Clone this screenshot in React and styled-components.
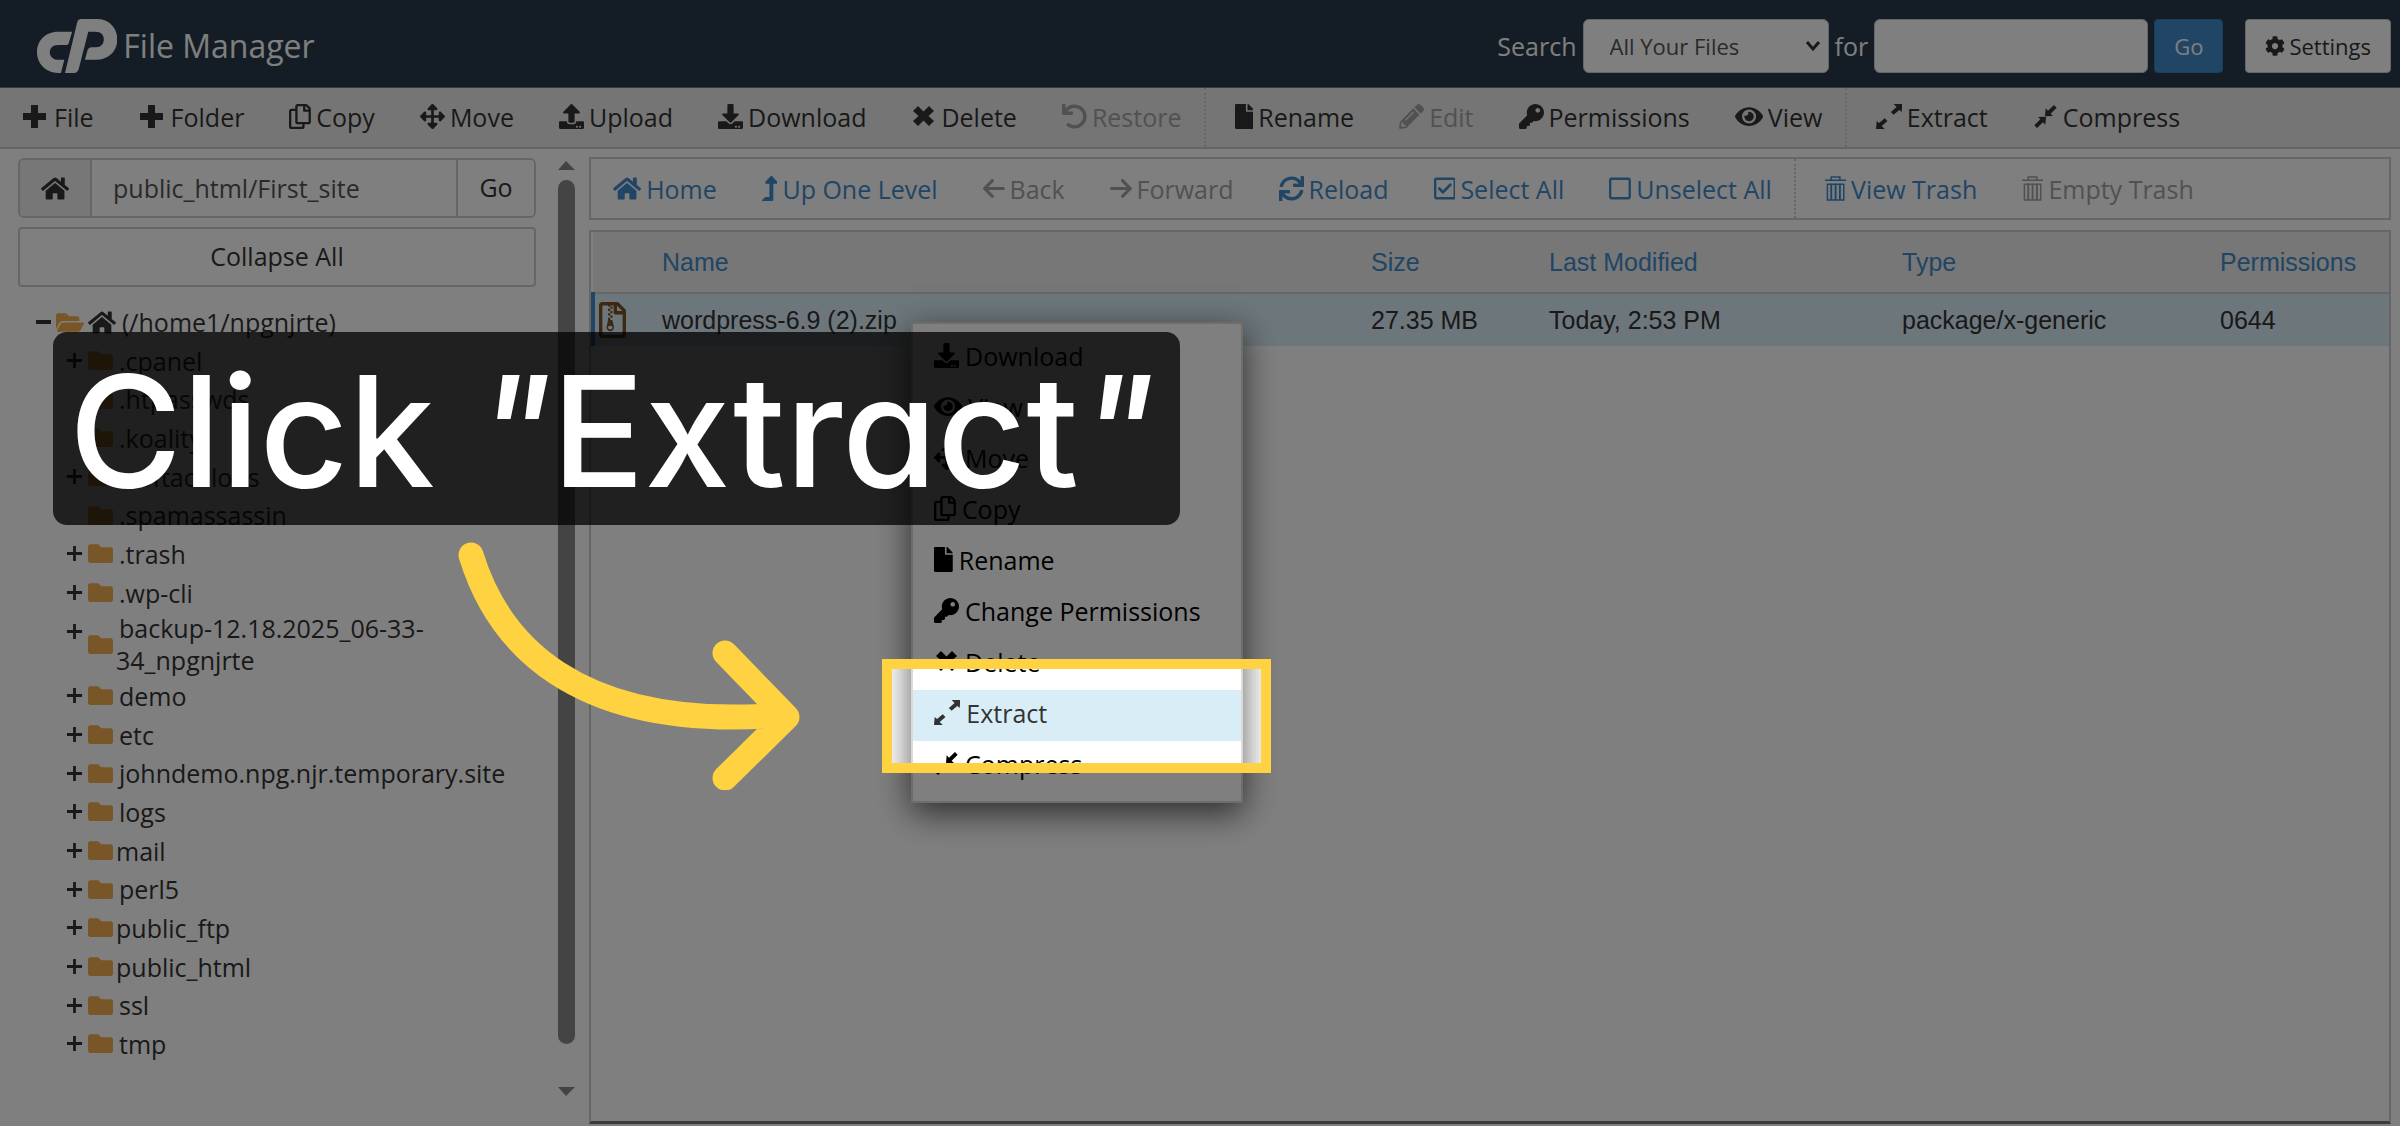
import React from "react";
import styled, { createGlobalStyle } from 'styled-components';
import { IconContext } from 'react-icons';
import {
	FaRegCopy, FaArrowsAlt, FaUpload, FaDownload, FaUndo, FaFile, FaPencilAlt, FaKey, FaEye,
	FaHome, FaLevelUpAlt, FaSync, FaRegCheckSquare, FaRegSquare, FaCog, FaFolder, FaFolderOpen,
	FaRegFileArchive
} from 'react-icons/fa';
import { FaArrowLeft, FaArrowRight } from 'react-icons/fa6';


const PlusIcon = () => (
	<svg viewBox="0 0 25 25" fill="currentColor"><path d="M9 1h7v8h8v7h-8v8H9v-8H1V9h8z" /></svg>
);

const TimesIcon = () => (
	<svg viewBox="0 0 25 25" fill="currentColor"><path d="M7 2l5.500 5.500L18 2l5 5-5.500 5L23 17l-5 5-5.500-5.500L7 22l-5-5 5.500-5L2 7z" /></svg>
);

const ExpandIcon = () => (
	<svg viewBox="0 0 78 74" fill="currentColor">
		<path d="M52 0h26l-2 24-7-6-17 14-8-8 17-15z" />
		<path d="M26 74H0l2-24 7 6 17-14 8 8-17 15z" />
	</svg>
);

const CompressIcon = () => (
	<svg viewBox="0 0 75 75" fill="currentColor">
		<path d="M63 3l8 8-18 18 7 7-24 1 2-24 7 7z" />
		<path d="M12 72l-8-8 18-18-7-7 24-1-2 24-7-7z" />
	</svg>
);

const TrashIcon = () => (
	<svg viewBox="0 0 22 26" fill="none" stroke="currentColor" strokeWidth="1.600">
		<path d="M0 4.500h22M6.500 4V1h9v3" />
		<path d="M2.500 8.500h17v16.500h-17z" />
		<path d="M6.500 8v17M11 8v17M15.500 8v17" strokeWidth="2" />
	</svg>
);

const CpanelLogo = () => (
	<svg viewBox="0 0 238 160" fill="currentColor" role="img" aria-label="cPanel">
		<path d="M104 38H62C24 38 0 66 0 98c0 36 28 62 62 62h9l10-39H64c-15 0-26-9-26-22 0-14 10-22 24-22h25c4 0 6-2 7-5z" />
		<path d="M83 160L119 10c2-7 6-10 12-10h47c36 0 60 27 60 61 0 33-26 60-62 60h-34l7-26c2-7 6-11 13-11h13c14 0 23-10 23-23 0-14-9-23-24-23h-22l-28 109c-2 9-7 13-14 13z" />
	</svg>
);


const tools = [
	[
		{ label: 'File', icon: PlusIcon, wide: true },
		{ label: 'Folder', icon: PlusIcon, wide: true },
		{ label: 'Copy', icon: FaRegCopy },
		{ label: 'Move', icon: FaArrowsAlt },
		{ label: 'Upload', icon: FaUpload },
		{ label: 'Download', icon: FaDownload },
		{ label: 'Delete', icon: TimesIcon },
		{ label: 'Restore', icon: FaUndo, disabled: true },
	],
	[
		{ label: 'Rename', icon: FaFile },
		{ label: 'Edit', icon: FaPencilAlt, disabled: true },
		{ label: 'Permissions', icon: FaKey },
		{ label: 'View', icon: FaEye },
	],
	[
		{ label: 'Extract', icon: ExpandIcon },
		{ label: 'Compress', icon: CompressIcon },
	],
];

const actions = [
	[
		{ label: 'Home', icon: FaHome },
		{ label: 'Up One Level', icon: FaLevelUpAlt },
		{ label: 'Back', icon: FaArrowLeft, disabled: true },
		{ label: 'Forward', icon: FaArrowRight, disabled: true },
		{ label: 'Reload', icon: FaSync },
		{ label: 'Select All', icon: FaRegCheckSquare },
		{ label: 'Unselect All', icon: FaRegSquare },
	],
	[
		{ label: 'View Trash', icon: TrashIcon },
		{ label: 'Empty Trash', icon: TrashIcon, disabled: true },
	],
];

const folders = [
	{ name: '.cpanel', open: true },
	{ name: '.htpasswds' },
	{ name: '.koality' },
	{ name: '.softaculous', open: true },
	{ name: '.spamassassin' },
	{ name: '.trash', open: true },
	{ name: '.wp-cli', open: true },
	{ name: 'backup-12.18.2025_06-33-34_npgnjrte', open: true },
	{ name: 'demo', open: true },
	{ name: 'etc', open: true },
	{ name: 'johndemo.npg.njr.temporary.site', open: true },
	{ name: 'logs', open: true },
	{ name: 'mail', open: true, tight: true },
	{ name: 'perl5', open: true },
	{ name: 'public_ftp', open: true, tight: true },
	{ name: 'public_html', open: true, tight: true },
	{ name: 'ssl', open: true },
	{ name: 'tmp', open: true },
];

const menuItems = [
	{ label: 'Download', icon: FaDownload },
	{ label: 'View', icon: FaEye },
	{ label: 'Move', icon: FaArrowsAlt },
	{ label: 'Copy', icon: FaRegCopy },
	{ label: 'Rename', icon: FaFile },
	{ label: 'Change Permissions', icon: FaKey },
	{ label: 'Delete', icon: TimesIcon },
	{ label: 'Extract', icon: ExpandIcon, active: true },
	{ label: 'Compress', icon: CompressIcon },
];

const iconSettings = { size: '100%' };


const ButtonGroups = ({ groups, link }) => groups.map((group, i) => (
	<ToolGroup key={i} $link={link}>
		{group.map(({ label, icon: Icon, disabled, wide }) => (
			<ToolButton key={label} type="button" disabled={disabled} $link={link} $wide={wide}>
				<Icon />{label}
			</ToolButton>
		))}
	</ToolGroup>
));

const App = () => {
	return (
		<IconContext.Provider value={iconSettings}>
			<Page>
				<GlobalStyle />
				<Header>
					<Brand href="#">
						<CpanelLogo />
						<span>File Manager</span>
					</Brand>
					<SearchForm>
						<label htmlFor="scope">Search</label>
						<SelectWrap>
							<select id="scope" defaultValue="all">
								<option value="all">All Your Files</option>
							</select>
							<svg viewBox="0 0 16 12" fill="none" stroke="currentColor" strokeWidth="3"><path d="M2 2l6 7 6-7" /></svg>
						</SelectWrap>
						<label htmlFor="query">for</label>
						<SearchInput id="query" type="text" />
						<HeaderButton type="button" $primary>Go</HeaderButton>
					</SearchForm>
					<HeaderButton type="button"><FaCog />Settings</HeaderButton>
				</Header>
				<Toolbar><ButtonGroups groups={tools} /></Toolbar>
				<Body>
					<Sidebar>
						<PathGroup>
							<PathHome type="button" aria-label="Home directory"><FaHome /></PathHome>
							<PathInput aria-label="Path" type="text" defaultValue="public_html/First_site" />
							<PathGo type="button">Go</PathGo>
						</PathGroup>
						<CollapseButton type="button">Collapse All</CollapseButton>
						<Tree>
							<RootRow>
								<i />
								<FaFolderOpen />
								<FaHome />
								<span>(/home1/npgnjrte)</span>
							</RootRow>
							{folders.map(({ name, open, tight }) => (
								<TreeRow key={name} $tight={tight}>
									<Toggle>{open && <svg viewBox="0 0 18 18" stroke="currentColor" strokeWidth="3"><path d="M9 1v16M1 9h16" /></svg>}</Toggle>
									<FaFolder />
									<span>{name}</span>
								</TreeRow>
							))}
						</Tree>
					</Sidebar>
					<Scrollbar aria-hidden="true">
						<svg viewBox="0 0 17 9"><path d="M0 9L8 0l9 9z" /></svg>
						<Thumb />
						<svg viewBox="0 0 17 9"><path d="M0 0h17L8 9z" /></svg>
					</Scrollbar>
					<Main>
						<ActionBar><ButtonGroups groups={actions} link /></ActionBar>
						<TablePanel>
							<FileTable>
								<colgroup>
									<col width="69" /><col /><col width="178" /><col width="353" /><col width="318" /><col width="169" />
								</colgroup>
								<thead>
									<tr><th></th><th>Name</th><th>Size</th><th>Last Modified</th><th>Type</th><th>Permissions</th></tr>
								</thead>
								<tbody>
									<tr>
										<td><FaRegFileArchive /></td>
										<td>wordpress-6.9 (2).zip</td>
										<td>27.35 MB</td>
										<td>Today, 2:53 PM</td>
										<td>package/x-generic</td>
										<td>0644</td>
									</tr>
								</tbody>
							</FileTable>
						</TablePanel>
					</Main>
				</Body>
				<ContextMenu>
					{menuItems.map(({ label, icon: Icon, active }) => (
						<MenuItem key={label} type="button" $active={active}><Icon />{label}</MenuItem>
					))}
				</ContextMenu>
				<Spotlight />
				<Callout>Click <em>"</em>Extract<em>"</em></Callout>
				<Arrow viewBox="0 0 360 260">
					<path d="M21 25C47 110 122 202 332 185M275 123L337 187 275 248" />
				</Arrow>
			</Page>
		</IconContext.Provider>
	)
}


const GlobalStyle = createGlobalStyle`
*{
	box-sizing: border-box;
}
body{
	margin: 0;
	background: #ffffff;
}
body, button, input, select{
	font-family: "Open Sans", sans-serif;
	font-size: 25px;
	color: #333333;
}
button{
	cursor: pointer;
}
`;

const Page = styled.div`
position: relative;
display: flex;
flex-direction: column;
min-height: 100vh;
overflow: hidden;
`;

const Header = styled.header`
display: flex;
align-items: center;
gap: 22px;
height: 87px;
padding: 4px 9px 0px 37px;
background: #293a4a;
color: #ffffff;
`;

const Brand = styled.a`
display: flex;
align-items: center;
gap: 6px;
margin-right: auto;
color: #ffffff;
font-size: 32px;
text-decoration: none;
svg{
	height: 54px;
}
`;

const SearchForm = styled.form`
display: flex;
align-items: center;
gap: 6px;
`;

const SelectWrap = styled.div`
position: relative;
select{
	width: 246px;
	height: 54px;
	padding: 0px 26px;
	border: 1px solid #cccccc;
	border-radius: 6px;
	background: #ffffff;
	color: #555555;
	font-size: 22px;
	appearance: none;
}
svg{
	position: absolute;
	right: 8px;
	top: 21px;
	width: 16px;
	color: #333333;
}
`;

const SearchInput = styled.input`
width: 274px;
height: 54px;
border: 1px solid #cccccc;
border-radius: 6px;
background: #ffffff;
`;

const HeaderButton = styled.button`
display: flex;
align-items: center;
gap: 4px;
height: 54px;
padding: 0px 19px;
border: 1px solid ${({ $primary }) => $primary ? '#357ebd' : '#cccccc'};
border-radius: 4px;
background: ${({ $primary }) => $primary ? '#428bca' : '#ffffff'};
color: ${({ $primary }) => $primary ? '#ffffff' : '#333333'};
font-size: 22px;
svg{
	height: 20px;
	width: auto;
}
`;

const Toolbar = styled.nav`
display: flex;
height: 62px;
border-top: 1px solid #777777;
border-bottom: 2px solid #c8c8d0;
background: #ebebeb;
`;

const ToolGroup = styled.div`
display: flex;
& + &{
	padding-left: ${({ $link }) => $link ? '7px' : '14px'};
	border-left: 2px dotted #cccccc;
}
`;

const ToolButton = styled.button`
display: flex;
align-items: center;
gap: ${({ $wide }) => $wide ? '7px' : '5px'};
padding: 0px 22px ${({ $link }) => $link ? '0px' : '2px'} 23px;
border: none;
background: none;
white-space: nowrap;
color: ${({ $link }) => $link ? '#428bca' : '#333333'};
&:first-child{
	padding-left: 22px;
}
&:disabled{
	color: #a3a3a3;
}
svg{
	height: 25px;
	width: auto;
	flex: none;
}
`;

const Body = styled.div`
display: flex;
flex: 1;
`;

const Sidebar = styled.aside`
display: flex;
flex-direction: column;
width: 536px;
padding: 9px 0px 66px 18px;
`;

const PathGroup = styled.div`
display: flex;
height: 60px;
border: 2px solid #cccccc;
border-radius: 6px;
overflow: hidden;
`;

const PathHome = styled.button`
display: flex;
align-items: center;
justify-content: center;
width: 72px;
padding: 0px;
border: none;
border-right: 2px solid #cccccc;
background: #eeeeee;
svg{
	height: 25px;
	width: auto;
}
`;

const PathInput = styled.input`
flex: 1;
min-width: 0px;
padding: 0px 21px;
border: none;
color: #555555;
`;

const PathGo = styled.button`
width: 78px;
padding-bottom: 3px;
border: none;
border-left: 2px solid #cccccc;
background: #ffffff;
`;

const CollapseButton = styled.button`
height: 60px;
margin: 9px 0px 19px;
padding-bottom: 3px;
border: 2px solid #cccccc;
border-radius: 4px;
background: #ffffff;
`;

const Tree = styled.ul`
display: flex;
flex: 1;
flex-direction: column;
justify-content: space-between;
margin: 0px;
padding: 0px;
list-style: none;
line-height: 32px;
`;

const RootRow = styled.li`
display: flex;
align-items: center;
padding-left: 18px;
i{
	width: 15px;
	height: 4px;
	margin-right: 5px;
	background: #333333;
}
svg{
	width: 28px;
	height: 25px;
	margin-right: 4px;
}
svg:first-of-type{
	color: #f0ad4e;
}
span{
	padding-left: 2px;
}
`;

const TreeRow = styled.li`
display: flex;
align-items: center;
padding-left: 48px;
svg{
	flex: none;
	width: 25px;
	height: 25px;
	color: #f0ad4e;
}
span{
	width: 400px;
	margin: -3px 0px;
	padding-left: 3px;
	text-indent: ${({ $tight }) => $tight ? '0px' : '3px'};
}
`;

const Toggle = styled.div`
align-self: flex-start;
display: flex;
align-items: center;
width: 22px;
height: 32px;
svg{
	width: 17px;
	height: 17px;
	color: #333333;
}
`;

const Scrollbar = styled.div`
display: flex;
flex-direction: column;
width: 17px;
margin: 0px 14px 0px 22px;
padding: 12px 0px 30px;
svg{
	height: 9px;
	fill: #888888;
}
`;

const Thumb = styled.div`
flex: 1;
margin: 10px 0px 43px;
border-radius: 9px;
background: #888888;
`;

const Main = styled.main`
display: flex;
flex: 1;
flex-direction: column;
gap: 10px;
padding: 8px 9px 2px 0px;
`;

const ActionBar = styled.nav`
display: flex;
height: 63px;
border: 2px solid #cccccc;
background: #ffffff;
`;

const TablePanel = styled.div`
flex: 1;
border: 2px solid #cccccc;
border-bottom: 3px solid #777777;
`;

const FileTable = styled.table`
width: 100%;
border-collapse: collapse;
table-layout: fixed;
font-family: "Liberation Sans", Arial, sans-serif;
text-align: left;
thead tr{
	height: 61px;
	border-bottom: 2px solid #cccccc;
	background: #eeeeee;
}
tbody tr{
	height: 53px;
	background: #d9edf7;
}
th, td{
	padding: 0px;
	font-weight: normal;
}
th{
	color: #428bca;
}
td:first-child{
	padding-left: 4px;
	border-left: 4px solid #428bca;
}
td svg{
	display: block;
	width: 27px;
	height: 36px;
	color: #7a5224;
}
`;

const ContextMenu = styled.div`
position: absolute;
left: 911px;
top: 322px;
width: 332px;
padding: 9px 0px;
border: 2px solid #dddad0;
background: #ffffff;
box-shadow: 0px 10px 32px rgba(0, 0, 0, 0.65);
`;

const MenuItem = styled.button`
display: flex;
align-items: center;
gap: 6px;
width: 100%;
height: 51px;
padding: 0px 21px 6px;
border: none;
background: ${({ $active }) => $active ? '#d9edf7' : '#ffffff'};
color: ${({ $active }) => $active ? '#333333' : '#000000'};
svg{
	height: 25px;
	width: auto;
	flex: none;
}
`;

const Spotlight = styled.div`
position: absolute;
left: 892px;
top: 669px;
width: 369px;
height: 94px;
outline: 10px solid #ffd242;
box-shadow: 0px 0px 0px 3000px rgba(0, 0, 0, 0.5);
pointer-events: none;
`;

const Callout = styled.div`
position: absolute;
left: 53px;
top: 332px;
width: 1127px;
height: 193px;
padding: 0px 16px;
border-radius: 14px;
background: rgba(0, 0, 0, 0.75);
color: #ffffff;
font-family: Inter, sans-serif;
font-size: 154px;
font-weight: 500;
font-feature-settings: "cv11";
line-height: 198px;
white-space: nowrap;
`;

const Arrow = styled.svg`
position: absolute;
left: 450px;
top: 530px;
width: 360px;
fill: none;
stroke: #ffd242;
stroke-width: 25;
stroke-linecap: round;
stroke-linejoin: round;
`;


export default App;
